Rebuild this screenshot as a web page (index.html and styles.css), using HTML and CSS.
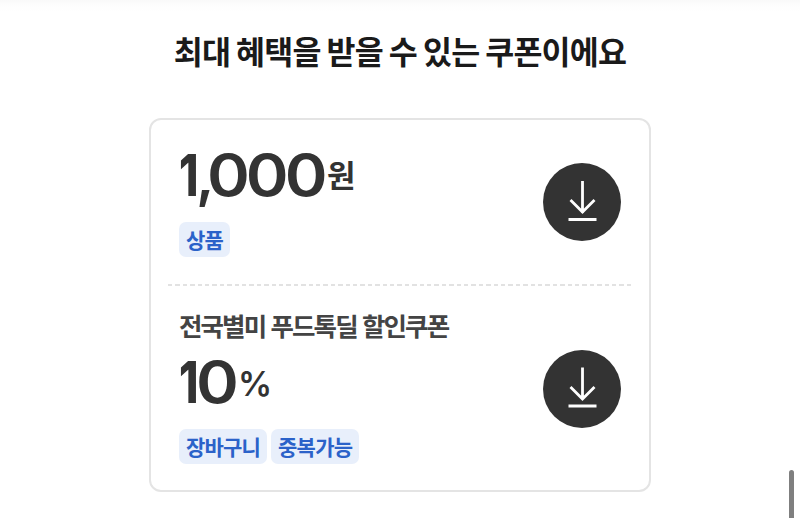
FILE: index.html
```html
<!DOCTYPE html>
<html lang="ko">
<head>
    <meta charset="UTF-8">
    <meta name="viewport" content="width=device-width, initial-scale=1.0">
    <title>쿠폰</title>
    <link rel="stylesheet" href="styles.css">
</head>
<body>

<h2 class="title">최대 혜택을 받을 수 있는 쿠폰이에요</h2>

<div class="coupon-box">
    <div class="coupon">
        <div class="info">
            <div class="price"><span class="num one">1</span><span class="num comma">,</span><span class="num zeros thousand">000</span><span class="unit">원</span></div>
            <div class="tags">
                <span class="tag">상품</span>
            </div>
        </div>
        <button class="download" aria-label="다운로드">
            <svg width="78" height="78" viewBox="0 0 78 78" fill="none" stroke="#fff" stroke-width="2.8">
                <path d="M39.5 18V50M27.5 37L39.5 49L51.5 37M25.5 56.5H53.5"/>
            </svg>
        </button>
    </div>
    <div class="divider"></div>
    <div class="coupon">
        <div class="info">
            <div class="name">전국별미 푸드톡딜 할인쿠폰</div>
            <div class="price"><span class="num one">1</span><span class="num zeros ten">0</span><span class="unit percent">%</span></div>
            <div class="tags">
                <span class="tag">장바구니</span>
                <span class="tag">중복가능</span>
            </div>
        </div>
        <button class="download" aria-label="다운로드">
            <svg width="78" height="78" viewBox="0 0 78 78" fill="none" stroke="#fff" stroke-width="2.8">
                <path d="M39.5 17.5V49.5M27.5 37L39.5 49L51.5 37M25.5 56H53.5"/>
            </svg>
        </button>
    </div>
</div>

<div class="scrollbar"></div>

</body>
</html>
```
FILE: styles.css
```css
* {
    box-sizing: border-box;
}
body {
    margin: 0;
    height: 518px;
    overflow: hidden;
    background: linear-gradient(#f9f9f9, #fdfdfd 5px, #fff 12px) #fff;
    font-family: 'Noto Sans CJK KR', sans-serif;
    color: #333;
}
.title {
    margin: 0;
    padding-top: 27px;
    height: 118px;
    font-size: 31.5px;
    line-height: 46px;
    font-weight: 700;
    letter-spacing: -0.8px;
    word-spacing: -2.1px;
    text-align: center;
    white-space: nowrap;
    color: #1a1a1a;
}
.coupon-box {
    width: 502px;
    height: 374px;
    margin: 0 auto;
    border: 2px solid #e4e4e4;
    border-radius: 12px;
}
.coupon {
    display: flex;
    align-items: flex-start;
    justify-content: space-between;
    height: 164px;
    padding: 20px 28px 0;
}
.divider {
    height: 2px;
    margin: 0 18px 0 17px;
    background: repeating-linear-gradient(90deg, #e2e2e2 0 4.4px, #fff 4.4px 7.4px);
}
.divider + .coupon {
    height: 204px;
}
.name {
    height: 38px;
    margin-bottom: 3px;
    font-size: 25.5px;
    line-height: 38px;
    font-weight: 700;
    letter-spacing: -1.9px;
    white-space: nowrap;
    color: #444;
}
.price {
    display: flex;
    height: 70px;
    margin-bottom: 12px;
}
.num {
    font-family: Inter, sans-serif;
    font-size: 58px;
    line-height: 70px;
    font-weight: 600;
    transform-origin: left;
}
.one {
    width: 22px;
    margin-right: -5px;
    font-weight: 800;
    letter-spacing: -8px;
    transform: scaleX(0.76);
}
.comma {
    width: 11px;
    letter-spacing: -8px;
}
.zeros {
    letter-spacing: -3.6px;
    transform: scaleX(1.12);
}
.thousand {
    width: 120px;
}
.ten {
    width: 42px;
}
.unit {
    padding-top: 11px;
    font-size: 31px;
    line-height: 46px;
    font-weight: 700;
}
.percent {
    padding-top: 14px;
    font-family: Inter, sans-serif;
    font-size: 34px;
    font-weight: 600;
}
.tags {
    display: flex;
    gap: 4px;
}
.tag {
    height: 35px;
    padding: 0 7px;
    border-radius: 7px;
    background-color: #e8effb;
    font-size: 21px;
    line-height: 35px;
    font-weight: 700;
    letter-spacing: -0.8px;
    color: #2b62c9;
}
.download {
    width: 78px;
    height: 78px;
    margin-top: 23px;
    padding: 0;
    border: none;
    border-radius: 50%;
    background-color: #333;
}
.divider + .coupon .download {
    margin-top: 44px;
}
.download svg {
    display: block;
}
.scrollbar {
    position: absolute;
    top: 470px;
    right: 6px;
    width: 5px;
    height: 60px;
    border-radius: 3px;
    background-color: #7f7f7f;
}
```
